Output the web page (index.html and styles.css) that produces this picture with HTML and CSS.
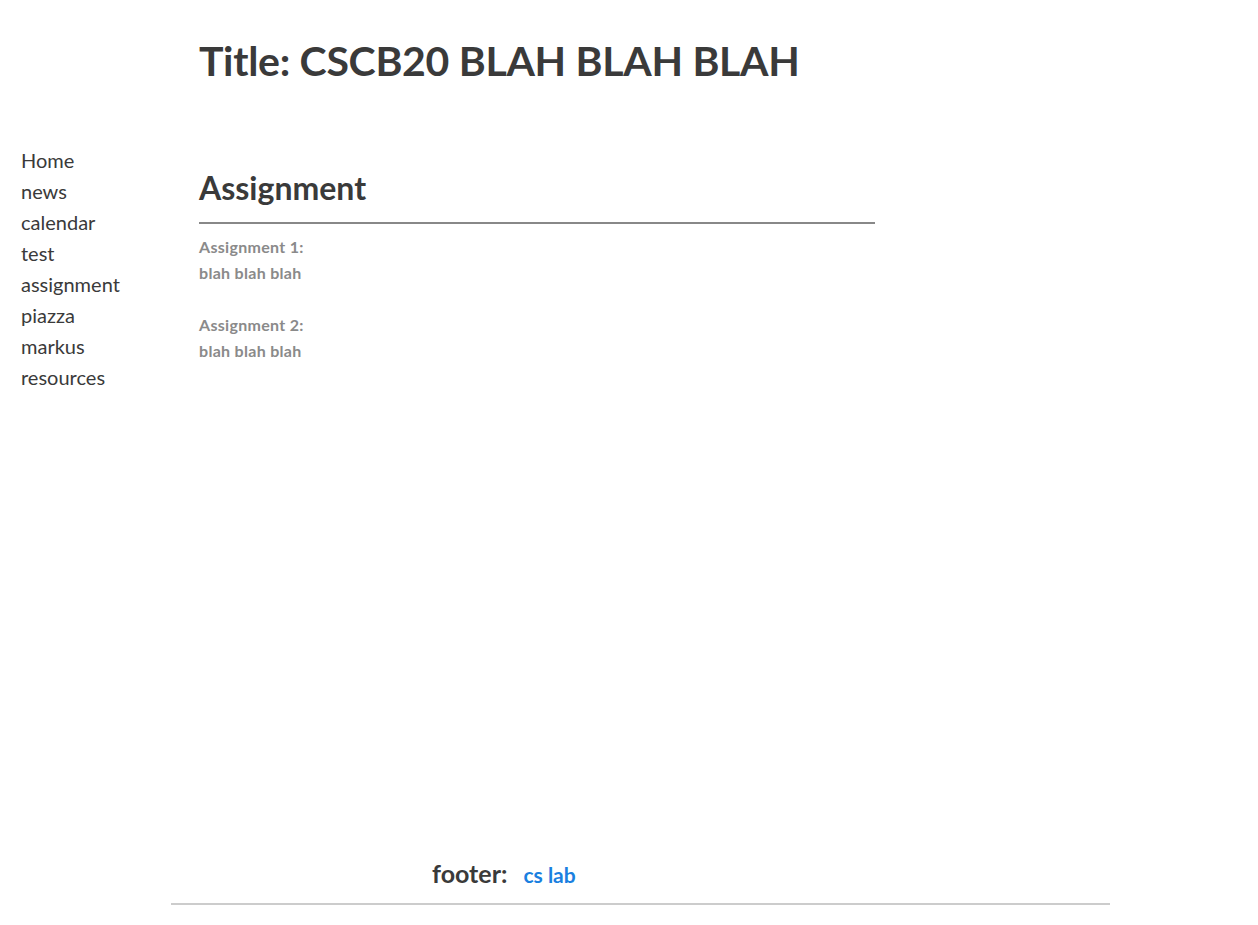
FILE: index.html
```html
<!DOCTYPE html>
<html>
<head>
<meta charset="utf-8">
<link rel="stylesheet" href="styles.css">
</head>
<body>
<div class="page">
  <header class="top">
    <h1 class="title">Title: CSCB20 BLAH BLAH BLAH</h1>
  </header>
  <div class="middle">
    <nav class="nav">
      <a href="#">Home</a>
      <a href="#">news</a>
      <a href="#">calendar</a>
      <a href="#">test</a>
      <a href="#">assignment</a>
      <a href="#">piazza</a>
      <a href="#">markus</a>
      <a href="#">resources</a>
    </nav>
    <main class="main">
      <h2 class="section-title">Assignment</h2>
      <div class="item">
        <p>Assignment 1:</p>
        <p>blah blah blah</p>
      </div>
      <div class="item">
        <p>Assignment 2:</p>
        <p>blah blah blah</p>
      </div>
    </main>
  </div>
  <footer class="footer">
    <div class="footer-inner">
      <span class="footer-label">footer:</span>
      <a class="footer-link" href="#">cs lab</a>
    </div>
  </footer>
</div>
</body>
</html>
```
FILE: styles.css
```css
* { box-sizing: border-box; }
html, body { margin: 0; padding: 0; background: #fff; }
body {
  font-family: Lato, "Open Sans", sans-serif;
  color: #3a3a3a;
}
.page {
  width: 1258px;
  height: 925px;
  display: flex;
  flex-direction: column;
}
.top {
  padding: 36px 0 0 199px;
  height: 145px;
}
.title {
  margin: 0;
  font-size: 41px;
  font-weight: 700;
  line-height: 50px;
  color: #3a3a3a;
  letter-spacing: -0.3px;
}
.middle {
  display: flex;
  flex: 1;
}
.nav {
  width: 199px;
  padding-left: 21px;
  display: flex;
  flex-direction: column;
}
.nav a {
  color: #3a3a3a;
  text-decoration: none;
  font-size: 20px;
  line-height: 31px;
}
.main {
  width: 676px;
  padding-top: 23px;
}
.section-title {
  margin: 0;
  font-size: 32px;
  font-weight: 700;
  line-height: 40px;
  padding-bottom: 14px;
  border-bottom: 2px solid #888;
  color: #3a3a3a;
}
.item {
  padding-top: 10px;
  padding-bottom: 16px;
}
.item p {
  margin: 0;
  font-size: 16px;
  font-weight: 700;
  line-height: 26px;
  letter-spacing: 0.3px;
  color: #8a8a8a;
}
.footer {
  padding: 0 148px 20px 171px;
}
.footer-inner {
  border-bottom: 2px solid #ccc;
  padding: 0 0 15px 261px;
  display: flex;
  align-items: baseline;
  gap: 16px;
}
.footer-label {
  font-size: 25px;
  font-weight: 700;
  line-height: 30px;
  color: #3a3a3a;
}
.footer-link {
  font-size: 21px;
  font-weight: 700;
  color: #1a80e0;
  text-decoration: none;
}
```
